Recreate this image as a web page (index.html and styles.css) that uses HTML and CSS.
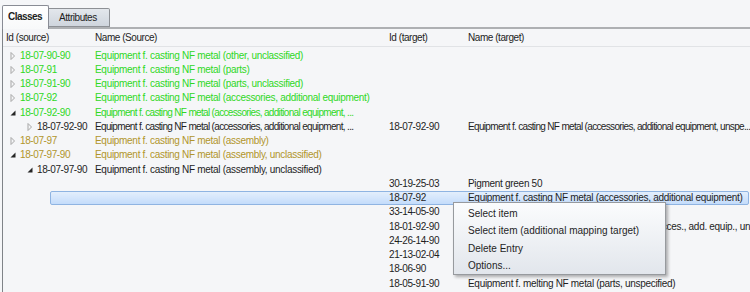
FILE: index.html
```html
<!DOCTYPE html>
<html>
<head>
<meta charset="utf-8">
<link rel="stylesheet" href="styles.css">
</head>
<body>
<div class="tabs">
  <div class="tab active">Classes</div>
  <div class="tab">Attributes</div>
</div>
<div class="panel">
  <div class="row head">
    <div class="c1">Id (source)</div>
    <div class="c2">Name (Source)</div>
    <div class="c3">Id (target)</div>
    <div class="c4">Name (target)</div>
  </div>
  <div class="rows">
    <div class="row green">
      <div class="c1 l1"><svg class="tri" viewBox="0 0 6 8"><path d="M1 0.5 L4.5 4 L1 7.5 Z" fill="none" stroke="#a6a6a6"/></svg><span class="id">18-07-90-90</span></div>
      <div class="c2">Equipment f. casting NF metal (other, unclassified)</div>
    </div>
    <div class="row green">
      <div class="c1 l1"><svg class="tri" viewBox="0 0 6 8"><path d="M1 0.5 L4.5 4 L1 7.5 Z" fill="none" stroke="#a6a6a6"/></svg><span class="id">18-07-91</span></div>
      <div class="c2">Equipment f. casting NF metal (parts)</div>
    </div>
    <div class="row green">
      <div class="c1 l1"><svg class="tri" viewBox="0 0 6 8"><path d="M1 0.5 L4.5 4 L1 7.5 Z" fill="none" stroke="#a6a6a6"/></svg><span class="id">18-07-91-90</span></div>
      <div class="c2">Equipment f. casting NF metal (parts, unclassified)</div>
    </div>
    <div class="row green">
      <div class="c1 l1"><svg class="tri" viewBox="0 0 6 8"><path d="M1 0.5 L4.5 4 L1 7.5 Z" fill="none" stroke="#a6a6a6"/></svg><span class="id">18-07-92</span></div>
      <div class="c2">Equipment f. casting NF metal (accessories, additional equipment)</div>
    </div>
    <div class="row green">
      <div class="c1 l1"><svg class="tri" viewBox="0 0 6 8"><path d="M5.5 1.5 L5.5 6.5 L0.5 6.5 Z" fill="#262626"/></svg><span class="id">18-07-92-90</span></div>
      <div class="c2 tight">Equipment f. casting NF metal (accessories, additional equipment, ...</div>
    </div>
    <div class="row">
      <div class="c1 l2"><svg class="tri" viewBox="0 0 6 8"><path d="M1 0.5 L4.5 4 L1 7.5 Z" fill="none" stroke="#a6a6a6"/></svg><span class="id">18-07-92-90</span></div>
      <div class="c2 tight">Equipment f. casting NF metal (accessories, additional equipment, ...</div>
      <div class="c3 id">18-07-92-90</div>
      <div class="c4 tight">Equipment f. casting NF metal (accessories, additional equipment, unspe...</div>
    </div>
    <div class="row gold">
      <div class="c1 l1"><svg class="tri" viewBox="0 0 6 8"><path d="M1 0.5 L4.5 4 L1 7.5 Z" fill="none" stroke="#a6a6a6"/></svg><span class="id">18-07-97</span></div>
      <div class="c2">Equipment f. casting NF metal (assembly)</div>
    </div>
    <div class="row gold">
      <div class="c1 l1"><svg class="tri" viewBox="0 0 6 8"><path d="M5.5 1.5 L5.5 6.5 L0.5 6.5 Z" fill="#262626"/></svg><span class="id">18-07-97-90</span></div>
      <div class="c2">Equipment f. casting NF metal (assembly, unclassified)</div>
    </div>
    <div class="row">
      <div class="c1 l2"><svg class="tri" viewBox="0 0 6 8"><path d="M5.5 1.5 L5.5 6.5 L0.5 6.5 Z" fill="#262626"/></svg><span class="id">18-07-97-90</span></div>
      <div class="c2">Equipment f. casting NF metal (assembly, unclassified)</div>
    </div>
    <div class="row">
      <div class="c1"></div><div class="c2"></div>
      <div class="c3 id">30-19-25-03</div>
      <div class="c4">Pigment green 50</div>
    </div>
    <div class="row sel">
      <div class="c1"></div><div class="c2"></div>
      <div class="c3 id">18-07-92</div>
      <div class="c4">Equipment f. casting NF metal (accessories, additional equipment)</div>
    </div>
    <div class="row">
      <div class="c1"></div><div class="c2"></div>
      <div class="c3 id">33-14-05-90</div>
      <div class="c4">Pigment</div>
    </div>
    <div class="row">
      <div class="c1"></div><div class="c2"></div>
      <div class="c3 id">18-01-92-90</div>
      <div class="c4">Equipment f. vacuum casting NF metal (dies, acces., add. equip., unspecified)</div>
    </div>
    <div class="row">
      <div class="c1"></div><div class="c2"></div>
      <div class="c3 id">24-26-14-90</div>
      <div class="c4">Castings</div>
    </div>
    <div class="row">
      <div class="c1"></div><div class="c2"></div>
      <div class="c3 id">21-13-02-04</div>
      <div class="c4">Metal</div>
    </div>
    <div class="row">
      <div class="c1"></div><div class="c2"></div>
      <div class="c3 id">18-06-90</div>
      <div class="c4">Equipment</div>
    </div>
    <div class="row">
      <div class="c1"></div><div class="c2"></div>
      <div class="c3 id">18-05-91-90</div>
      <div class="c4">Equipment f. melting NF metal (parts, unspecified)</div>
    </div>
  </div>
</div>
<div class="menu">
  <div class="item">Select item</div>
  <div class="item">Select item (additional mapping target)</div>
  <div class="item">Delete Entry</div>
  <div class="item">Options...</div>
</div>
</body>
</html>
```
FILE: styles.css
```css
html, body {
  margin: 0;
  padding: 0;
  width: 750px;
  height: 292px;
  overflow: hidden;
  background: #f5f6f8;
  font-family: "Liberation Sans", Arial, sans-serif;
  font-size: 10px;
  color: #1e1e1e;
}
.tabs {
  display: flex;
  align-items: flex-end;
  height: 27px;
  padding-left: 2px;
  box-sizing: border-box;
  position: relative;
  z-index: 2;
}
.tab {
  box-sizing: border-box;
  height: 19px;
  width: 61px;
  padding-left: 10px;
  line-height: 18px;
  letter-spacing: -0.45px;
  border: 1px solid #8d9095;
  border-left: none;
  border-bottom: 1px solid #8d9095;
  border-radius: 0 2px 0 0;
  background: linear-gradient(#e3e7ec, #cfd5dd);
}
.tab.active {
  height: 24px;
  width: 47px;
  margin-bottom: -2px;
  padding-left: 5px;
  line-height: 21px;
  font-weight: bold;
  letter-spacing: -0.55px;
  border: 1px solid #898c95;
  border-bottom: none;
  border-radius: 2px 2px 0 0;
  background: linear-gradient(#ffffff, #f8f9fa);
}
.panel {
  margin-left: 2px;
  border-left: 1px solid #7f8388;
  border-top: 2px solid #aeb0b3;
  height: 263px;
  position: relative;
  z-index: 1;
}
.row {
  display: grid;
  grid-template-columns: 92px 294px 79px 282px;
  height: 14.25px;
  align-items: center;
  white-space: nowrap;
  position: relative;
  letter-spacing: -0.3px;
}
.row > div {
  overflow: hidden;
  position: relative;
  display: flex;
  align-items: center;
  height: 14px;
  line-height: 14px;
}
.row.head {
  height: 17px;
  border-bottom: 1px solid #e1e3e6;
  letter-spacing: -0.45px;
}
.head .c1 { padding-left: 3px; }
.rows { padding-top: 1.5px; }
.green { color: #2fd81f; }
.gold { color: #b1952b; }
.id { letter-spacing: -0.4px; }
.tight { letter-spacing: -0.67px; }
.l1 { padding-left: 7px; }
.l2 { padding-left: 24px; }
.tri {
  width: 6px;
  height: 8px;
  margin-right: 4px;
  flex: none;
}
.sel::before {
  content: "";
  position: absolute;
  left: 47px;
  right: 1px;
  top: 0;
  bottom: 0;
  border: 1px solid #8fb4e2;
  border-radius: 2px;
  background: linear-gradient(#e3eefc, #c4dcfb);
}
.menu {
  position: absolute;
  left: 453px;
  top: 202px;
  width: 213px;
  height: 73px;
  box-sizing: border-box;
  padding-top: 2px;
  border: 1px solid #979a9e;
  background: linear-gradient(#fbfcfd, #e2e6ec);
  box-shadow: 2px 2px 3px rgba(0, 0, 0, 0.3);
  z-index: 5;
}
.item {
  height: 17.3px;
  line-height: 17px;
  padding-left: 14px;
}
```
